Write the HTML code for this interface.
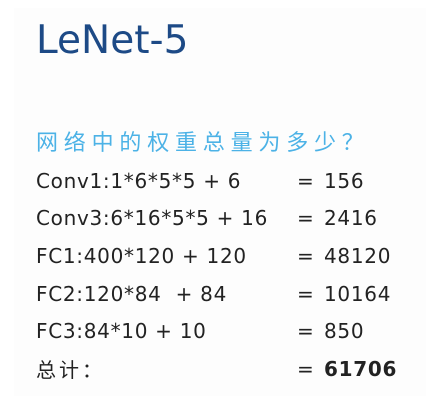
<!DOCTYPE html>
<html><head><meta charset="utf-8"><style>
body{margin:0;width:431px;height:416px;background:#fff;position:relative;overflow:hidden;font-family:"DejaVu Sans","Noto Sans CJK SC",sans-serif}
.panel{position:absolute;left:14px;top:8px;width:412px;height:388px;background:#fdfdfd}
.t{position:absolute;left:36px;top:18px;font-size:39px;color:#1d4a86;white-space:nowrap}
.q{position:absolute;left:36px;top:125px;font-size:22px;color:#4cb2e6;letter-spacing:5.8px;white-space:nowrap;font-family:"Noto Sans CJK SC",sans-serif}
.r,.e,.n{position:absolute;font-size:20px;color:#222;white-space:nowrap;line-height:24px;letter-spacing:0.7px}
.r{left:36px}.e{left:297px}.n{left:324px}
</style></head><body>
<div class="panel"></div>
<div class="t">LeNet-5</div>
<div class="q">网络中的权重总量为多少？</div>
<div class="r" style="top:169px">Conv1:1*6*5*5 + 6</div><div class="e" style="top:169px">=</div><div class="n" style="top:169px">156</div>
<div class="r" style="top:206px">Conv3:6*16*5*5 + 16</div><div class="e" style="top:206px">=</div><div class="n" style="top:206px">2416</div>
<div class="r" style="top:244px">FC1:400*120 + 120</div><div class="e" style="top:244px">=</div><div class="n" style="top:244px">48120</div>
<div class="r" style="top:282px">FC2:120*84 &nbsp;+ 84</div><div class="e" style="top:282px">=</div><div class="n" style="top:282px">10164</div>
<div class="r" style="top:319px">FC3:84*10 + 10</div><div class="e" style="top:319px">=</div><div class="n" style="top:319px">850</div>
<div class="r" style="top:357px;font-family:'Noto Sans CJK SC',sans-serif;letter-spacing:3px">总计：</div><div class="e" style="top:357px">=</div><div class="n" style="top:357px;font-weight:bold">61706</div>
</body></html>
